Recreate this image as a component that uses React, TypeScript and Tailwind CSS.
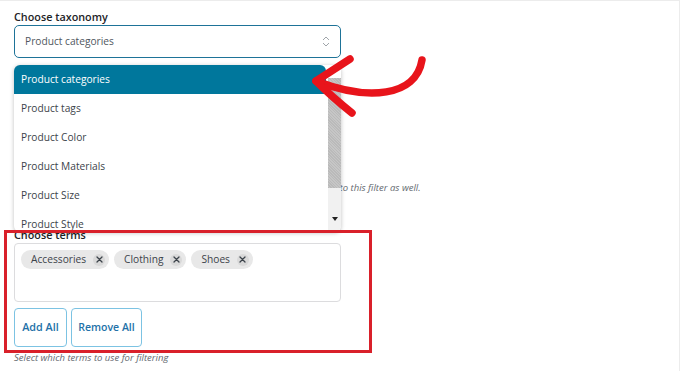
import React from 'react';

const options = [
	'Product categories',
	'Product tags',
	'Product Color',
	'Product Materials',
	'Product Size',
	'Product Style',
];

const terms = ['Accessories', 'Clothing', 'Shoes'];

const Chip = ({ label }: { label: string }) => (
	<span className="flex items-center h-[19px] rounded-full bg-[#e8e8e8] pl-[10px] pr-[4px] gap-[7px] text-[10.2px] text-[#3c434a]">
		{label}
		<span className="flex items-center justify-center w-[12px] h-[12px] rounded-full bg-[#d9d9d9]">
			<svg width="7" height="7" viewBox="0 0 7 7" stroke="#3c434a" strokeWidth="1.3" strokeLinecap="round">
				<path d="M1 1 L6 6 M6 1 L1 6" />
			</svg>
		</span>
	</span>
);

const App = () => {
	return (
		<div className="relative w-[680px] h-[371px] overflow-hidden bg-white border-t border-r border-[#ececec] font-['Open_Sans',sans-serif]">
			{/* taxonomy field */}
			<div className="w-[327px] ml-[14px] pt-[8px]">
				<label className="block text-[10.8px] font-semibold text-[#1d2327] leading-[16px]">
					Choose taxonomy
				</label>
				<div className="flex items-center justify-between h-[33px] px-[10px] border-[1.5px] border-[#1e7398] rounded-[5px] text-[10.2px] text-[#50575e]">
					<span>Product categories</span>
					<svg width="8" height="13" viewBox="0 0 8 13" fill="none" stroke="#a0a5aa" strokeWidth="1">
						<path d="M1 5 L4 2 L7 5" />
						<path d="M1 8 L4 11 L7 8" />
					</svg>
				</div>

				{/* other settings, partly covered by the open list */}
				<div className="h-[123px]" />
				<p className="whitespace-nowrap text-[9.5px] italic text-[#646970] leading-[14px]">
					Tick this option to also apply the selected children and parents product terms to this filter as well.
				</p>

				{/* terms field */}
				<div className="mt-[32px]">
					<label className="block text-[10.8px] font-semibold text-[#1d2327] leading-[16px]">
						Choose terms
					</label>
					<div className="h-[59px] border border-[#dcdcde] rounded-[4px] px-[6px] pt-[6px]">
						<div className="flex gap-[5px]">
							{terms.map((t) => (
								<Chip key={t} label={t} />
							))}
						</div>
					</div>
					<div className="flex gap-[4px] mt-[6px]">
						<button className="h-[39px] w-[53px] border-[1.5px] border-[#7cc3e3] rounded-[4px] text-[10.8px] font-semibold text-[#2271a8]">
							Add All
						</button>
						<button className="h-[39px] w-[71px] border-[1.5px] border-[#7cc3e3] rounded-[4px] text-[10.5px] font-semibold text-[#2271a8]">
							Remove All
						</button>
					</div>
					<p className="mt-[4px] text-[9.5px] italic text-[#646970] leading-[14px]">
						Select which terms to use for filtering
					</p>
				</div>
			</div>

			{/* open select list */}
			<div className="absolute left-[14px] top-[64px] w-[327px] h-[167px] flex bg-white rounded-[6px] shadow-[0_1px_4px_rgba(0,0,0,0.25)] overflow-hidden">
				<ul className="flex-1">
					{options.map((o, i) => (
						<li
							key={o}
							className={`h-[29px] flex items-center pl-[7px] text-[10.2px] ${
								i === 0 ? 'bg-[#00779c] text-white rounded-tr-[6px]' : 'text-[#3c434a]'
							}`}
						>
							{o}
						</li>
					))}
				</ul>
				<div className="w-[13px] ml-[2px] flex flex-col bg-[#f1f1f1]">
					<div className="h-[13px] bg-white" />
					<div className="h-[110px] bg-[repeating-linear-gradient(45deg,#bababa_0_1px,#c6c6c6_1px_2px)]" />
					<div className="flex-1 flex items-end justify-center pb-[11px]">
						<span className="w-0 h-0 border-l-[3px] border-r-[3px] border-t-[4px] border-l-transparent border-r-transparent border-t-[#222]" />
					</div>
				</div>
			</div>

			{/* red annotation arrow */}
			<svg className="absolute left-0 top-0" width="680" height="371" fill="none" stroke="#e8141b" strokeWidth="7.5" strokeLinecap="round" strokeLinejoin="round">
				<path d="M422 59 C416 96 368 100 316 80" />
				<path d="M350 58 L316 80 Q332 96 352 112" />
			</svg>

			{/* red annotation box */}
			<div className="absolute left-[4px] top-[229px] w-[368px] h-[123px] border-[3px] border-[#d9202a]" />
		</div>
	);
};

export default App;
